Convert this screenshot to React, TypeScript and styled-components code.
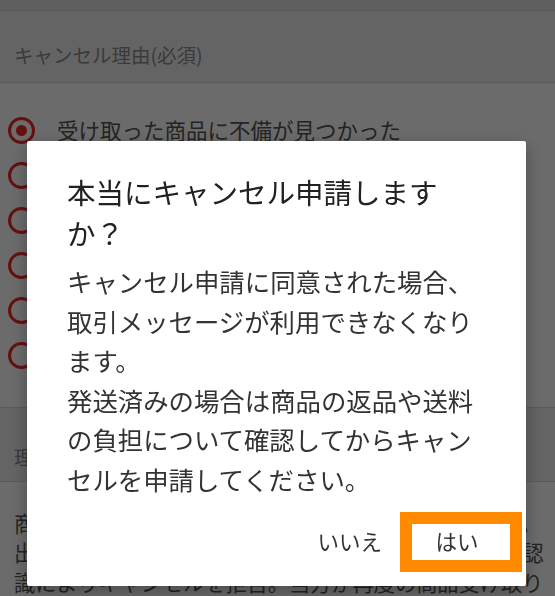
import React from 'react';
import styled, { createGlobalStyle } from 'styled-components';

const GlobalStyle = createGlobalStyle`
  html, body {
    margin: 0;
    padding: 0;
    background: #ffffff;
  }

  body {
    font-family: 'Noto Sans CJK JP', 'Noto Sans', sans-serif;
    overflow: hidden;
  }
`;

const reasons = [
  '受け取った商品に不備が見つかった',
  '商品が届かない',
  '購入者と合意した',
  '出品者から連絡がない',
  '誤って購入した',
  'その他',
];

function App() {
  return (
    <>
      <GlobalStyle />
      <Page>
        <TopBand />
        <SectionLabel>キャンセル理由(必須)</SectionLabel>
        <ReasonList>
          {reasons.map((reason, i) => (
            <ReasonRow key={reason}>
              <Radio $checked={i === 0} />
              <ReasonText>{reason}</ReasonText>
            </ReasonRow>
          ))}
        </ReasonList>
        <SectionLabel $compact>理由の詳細(任意)</SectionLabel>
        <Notice>
          商品到着後のキャンセルは、出品者の判断となります。出品者が商品を確認した結果、購入者様の不注意や誤認識によりキャンセルを拒否。当方が再度の商品受け取り
        </Notice>
      </Page>

      <Overlay>
        <Dialog role="dialog">
          <Title>本当にキャンセル申請しますか？</Title>
          <Body>
            <p>キャンセル申請に同意された場合、取引メッセージが利用できなくなります。</p>
            <p>発送済みの場合は商品の返品や送料の負担について確認してからキャンセルを申請してください。</p>
          </Body>
          <Actions>
            <TextButton>いいえ</TextButton>
            <TextButton $highlight>はい</TextButton>
          </Actions>
        </Dialog>
      </Overlay>
    </>
  );
}

export default App;

const Page = styled.main`
  width: 555px;
  height: 596px;
  display: flex;
  flex-direction: column;
  overflow: hidden;
`;

const TopBand = styled.div`
  height: 12px;
  background: #e2e2e2;
  border-bottom: 1px solid #d2d2d2;
`;

const SectionLabel = styled.div<{ $compact?: boolean }>`
  padding: ${({ $compact }) => ($compact ? '35px 14px 10px' : '30px 14px 13px')};
  background: #eeeeee;
  border-bottom: 1px solid #d8d8d8;
  font-size: 19.5px;
  line-height: 28px;
  color: #8a8a8a;
  white-space: nowrap;
`;

const ReasonList = styled.ul`
  list-style: none;
  margin: 0;
  padding: 25px 0 29px 8px;
  border-bottom: 1px solid #d8d8d8;
  background: #ffffff;
`;

const ReasonRow = styled.li`
  height: 45px;
  display: flex;
  align-items: center;
  gap: 22px;
`;

const Radio = styled.span<{ $checked?: boolean }>`
  position: relative;
  width: 27px;
  height: 27px;
  box-sizing: border-box;
  border: 3px solid #f02828;
  border-radius: 50%;
  flex-shrink: 0;

  &::after {
    content: '';
    display: ${({ $checked }) => ($checked ? 'block' : 'none')};
    position: absolute;
    inset: 5px;
    border-radius: 50%;
    background: #f02828;
  }
`;

const ReasonText = styled.span`
  font-size: 21.5px;
  line-height: 30px;
  color: #555555;
  white-space: nowrap;
`;

const Notice = styled.p`
  margin: 0;
  padding: 26px 8px 0 14px;
  font-size: 21.2px;
  line-height: 29.5px;
  color: #555555;
  background: #ffffff;
`;

const Overlay = styled.div`
  position: fixed;
  inset: 0;
  display: flex;
  justify-content: center;
  align-items: flex-start;
  padding-top: 141px;
  background: rgba(0, 0, 0, 0.58);
`;

const Dialog = styled.section`
  width: 499px;
  margin-right: 2px;
  box-sizing: border-box;
  padding: 30px 4px 14px 40px;
  background: #ffffff;
  border-radius: 2px;
  box-shadow: 0 6px 18px rgba(0, 0, 0, 0.3);
`;

const Title = styled.h2`
  margin: 0;
  padding-right: 36px;
  font-size: 28.5px;
  font-weight: 400;
  line-height: 41px;
  color: #222222;
`;

const Body = styled.div`
  margin-top: 9px;
  padding-right: 36px;
  font-size: 25.4px;
  line-height: 39.5px;
  color: #333333;

  & > p {
    margin: 0;
  }
`;

const Actions = styled.div`
  margin-top: 13px;
  display: flex;
  justify-content: flex-end;
  align-items: stretch;
`;

const TextButton = styled.button<{ $highlight?: boolean }>`
  height: 60px;
  box-sizing: border-box;
  padding: ${({ $highlight }) => ($highlight ? '0 20px 4px 12px' : '0 18px 4px')};
  width: ${({ $highlight }) => ($highlight ? '122px' : 'auto')};
  border: ${({ $highlight }) => ($highlight ? '12px solid #ff8a00' : '0')};
  background: #ffffff;
  font-family: inherit;
  font-size: 21.5px;
  color: #333333;
  cursor: pointer;
`;
